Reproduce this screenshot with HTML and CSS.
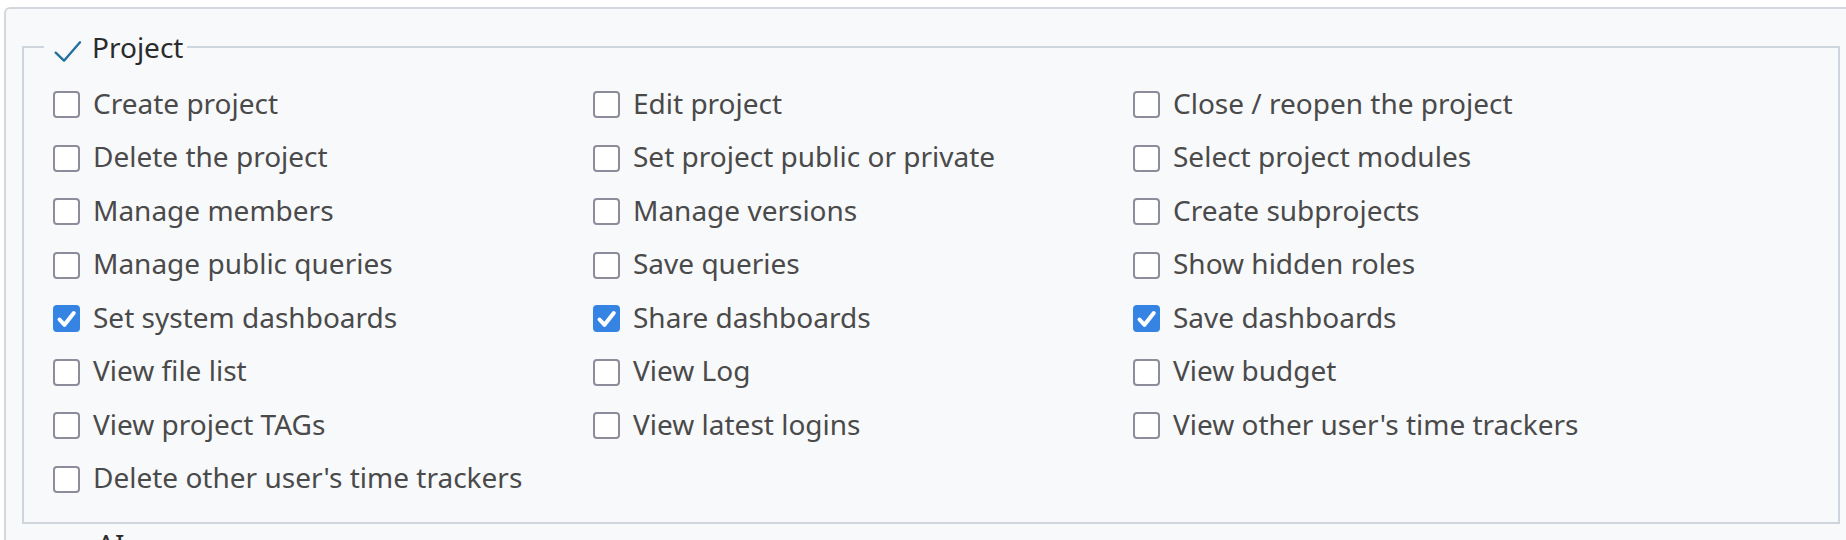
FILE: index.html
```html
<!DOCTYPE html>
<html lang="en">
<head>
    <meta charset="UTF-8">
    <meta name="viewport" content="width=device-width, initial-scale=1.0">
    <title>Role permissions</title>
    <link rel="stylesheet" href="styles.css">
</head>
<body>
    <div class="panel">
        <fieldset class="perm-group">
            <legend>
                <svg class="legend-icon" width="26" height="26" viewBox="0 0 26 26">
                    <polyline points="0.7,18.7 9,26.7 25,8.3" />
                </svg>
                <span>Project</span>
            </legend>
            <div class="perm-grid">
                <label class="perm"><input type="checkbox"><span class="box"><svg viewBox="0 0 27 27"><polyline points="6.5,14.5 11.5,19.8 20.8,8" /></svg></span><span class="text">Create project</span></label>
                <label class="perm"><input type="checkbox"><span class="box"><svg viewBox="0 0 27 27"><polyline points="6.5,14.5 11.5,19.8 20.8,8" /></svg></span><span class="text">Edit project</span></label>
                <label class="perm"><input type="checkbox"><span class="box"><svg viewBox="0 0 27 27"><polyline points="6.5,14.5 11.5,19.8 20.8,8" /></svg></span><span class="text">Close / reopen the project</span></label>

                <label class="perm"><input type="checkbox"><span class="box"><svg viewBox="0 0 27 27"><polyline points="6.5,14.5 11.5,19.8 20.8,8" /></svg></span><span class="text">Delete the project</span></label>
                <label class="perm"><input type="checkbox"><span class="box"><svg viewBox="0 0 27 27"><polyline points="6.5,14.5 11.5,19.8 20.8,8" /></svg></span><span class="text">Set project public or private</span></label>
                <label class="perm"><input type="checkbox"><span class="box"><svg viewBox="0 0 27 27"><polyline points="6.5,14.5 11.5,19.8 20.8,8" /></svg></span><span class="text">Select project modules</span></label>

                <label class="perm"><input type="checkbox"><span class="box"><svg viewBox="0 0 27 27"><polyline points="6.5,14.5 11.5,19.8 20.8,8" /></svg></span><span class="text">Manage members</span></label>
                <label class="perm"><input type="checkbox"><span class="box"><svg viewBox="0 0 27 27"><polyline points="6.5,14.5 11.5,19.8 20.8,8" /></svg></span><span class="text">Manage versions</span></label>
                <label class="perm"><input type="checkbox"><span class="box"><svg viewBox="0 0 27 27"><polyline points="6.5,14.5 11.5,19.8 20.8,8" /></svg></span><span class="text">Create subprojects</span></label>

                <label class="perm"><input type="checkbox"><span class="box"><svg viewBox="0 0 27 27"><polyline points="6.5,14.5 11.5,19.8 20.8,8" /></svg></span><span class="text">Manage public queries</span></label>
                <label class="perm"><input type="checkbox"><span class="box"><svg viewBox="0 0 27 27"><polyline points="6.5,14.5 11.5,19.8 20.8,8" /></svg></span><span class="text">Save queries</span></label>
                <label class="perm"><input type="checkbox"><span class="box"><svg viewBox="0 0 27 27"><polyline points="6.5,14.5 11.5,19.8 20.8,8" /></svg></span><span class="text">Show hidden roles</span></label>

                <label class="perm"><input type="checkbox" checked><span class="box"><svg viewBox="0 0 27 27"><polyline points="6.5,14.5 11.5,19.8 20.8,8" /></svg></span><span class="text">Set system dashboards</span></label>
                <label class="perm"><input type="checkbox" checked><span class="box"><svg viewBox="0 0 27 27"><polyline points="6.5,14.5 11.5,19.8 20.8,8" /></svg></span><span class="text">Share dashboards</span></label>
                <label class="perm"><input type="checkbox" checked><span class="box"><svg viewBox="0 0 27 27"><polyline points="6.5,14.5 11.5,19.8 20.8,8" /></svg></span><span class="text">Save dashboards</span></label>

                <label class="perm"><input type="checkbox"><span class="box"><svg viewBox="0 0 27 27"><polyline points="6.5,14.5 11.5,19.8 20.8,8" /></svg></span><span class="text">View file list</span></label>
                <label class="perm"><input type="checkbox"><span class="box"><svg viewBox="0 0 27 27"><polyline points="6.5,14.5 11.5,19.8 20.8,8" /></svg></span><span class="text">View Log</span></label>
                <label class="perm"><input type="checkbox"><span class="box"><svg viewBox="0 0 27 27"><polyline points="6.5,14.5 11.5,19.8 20.8,8" /></svg></span><span class="text">View budget</span></label>

                <label class="perm"><input type="checkbox"><span class="box"><svg viewBox="0 0 27 27"><polyline points="6.5,14.5 11.5,19.8 20.8,8" /></svg></span><span class="text">View project TAGs</span></label>
                <label class="perm"><input type="checkbox"><span class="box"><svg viewBox="0 0 27 27"><polyline points="6.5,14.5 11.5,19.8 20.8,8" /></svg></span><span class="text">View latest logins</span></label>
                <label class="perm"><input type="checkbox"><span class="box"><svg viewBox="0 0 27 27"><polyline points="6.5,14.5 11.5,19.8 20.8,8" /></svg></span><span class="text">View other user's time trackers</span></label>

                <label class="perm"><input type="checkbox"><span class="box"><svg viewBox="0 0 27 27"><polyline points="6.5,14.5 11.5,19.8 20.8,8" /></svg></span><span class="text">Delete other user's time trackers</span></label>
            </div>
        </fieldset>

        <fieldset class="perm-group collapsed">
            <legend>
                <svg class="legend-icon" width="26" height="26" viewBox="0 0 26 26">
                    <polyline points="9,18 17,26 9,34" />
                </svg>
                <span>AI</span>
            </legend>
        </fieldset>
    </div>
</body>
</html>
```

FILE: styles.css
```css
html, body {
    margin: 0;
    padding: 0;
    background-color: #fff;
    overflow: hidden;
}

body {
    font-family: 'Noto Sans', 'Open Sans', sans-serif;
    height: 540px;
}

.panel {
    box-sizing: border-box;
    width: 1854px;
    height: 560px;
    margin: 7px 0 0 4px;
    padding: 19px 16px 0 16px;
    background-color: #f8f9fb;
    border: 2px solid #d3d8de;
    border-radius: 6px;
}

.perm-group {
    margin: 0;
    padding: 12px 0 16px 20px;
    border: 2px solid #cfd5dc;
    min-width: 0;
}

.perm-group + .perm-group {
    margin-top: 1px;
}

.perm-group legend {
    display: flex;
    align-items: center;
    padding: 0 4px 0 11px;
    font-size: 28px;
    color: #2b2b2b;
}

.legend-icon {
    overflow: visible;
    margin-right: 11px;
    flex-shrink: 0;
}

.legend-icon polyline {
    fill: none;
    stroke: #24709f;
    stroke-width: 2.4;
    stroke-linecap: round;
    stroke-linejoin: round;
}

.collapsed legend span {
    margin-left: 5px;
}

.perm-grid {
    display: grid;
    grid-template-columns: repeat(3, 540px);
    grid-auto-rows: 53.5px;
    margin-left: 9px;
}

.perm {
    display: flex;
    align-items: center;
    gap: 13px;
    font-size: 28px;
    color: #4a4a4a;
    cursor: pointer;
    white-space: nowrap;
}

.perm input {
    display: none;
}

.box {
    box-sizing: border-box;
    width: 27px;
    height: 27px;
    flex-shrink: 0;
    border: 2px solid #8e8c9b;
    border-radius: 4px;
    background-color: #fff;
    display: flex;
}

.box svg {
    display: none;
    width: 27px;
    height: 27px;
    margin: -2px;
}

.box polyline {
    fill: none;
    stroke: #fff;
    stroke-width: 4;
    stroke-linecap: round;
    stroke-linejoin: round;
}

.perm input:checked + .box {
    background-color: #3584e4;
    border-color: #3584e4;
}

.perm input:checked + .box svg {
    display: block;
}

.perm .text {
    margin-bottom: 4px;
}
```
